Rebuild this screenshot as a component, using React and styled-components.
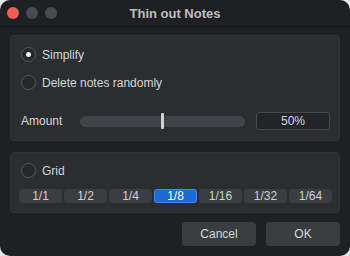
import styled, { createGlobalStyle } from "styled-components";

const GlobalStyle = createGlobalStyle`
  html, body {
    margin: 0;
    padding: 0;
    background: #e6e6e6;
  }
  body {
    font-family: "Liberation Sans", Arial, sans-serif;
  }
`;

const grids = ["1/1", "1/2", "1/4", "1/8", "1/16", "1/32", "1/64"];

const App = () => {
  return (
    <>
      <GlobalStyle />
      <Window>
        <TitleBar>
          <Lights>
            <Light color="#ee5f57" />
            <Light color="#4a4b4e" />
            <Light color="#4a4b4e" />
          </Lights>
          <Title>Thin out Notes</Title>
        </TitleBar>
        <Body>
          <Panel>
            <Options>
              <RadioRow>
                <Radio checked />
                <Label>Simplify</Label>
              </RadioRow>
              <RadioRow>
                <Radio />
                <Label>Delete notes randomly</Label>
              </RadioRow>
            </Options>
            <AmountRow>
              <AmountLabel>Amount</AmountLabel>
              <Track>
                <Thumb />
              </Track>
              <ValueBox>50%</ValueBox>
            </AmountRow>
          </Panel>
          <GridPanel>
            <RadioRow>
              <Radio />
              <Label>Grid</Label>
            </RadioRow>
            <GridRow>
              {grids.map((g) => (
                <GridButton key={g} active={g === "1/8"}>
                  {g}
                </GridButton>
              ))}
            </GridRow>
          </GridPanel>
          <Footer>
            <Button>Cancel</Button>
            <Button>OK</Button>
          </Footer>
        </Body>
      </Window>
    </>
  );
};

export default App;

const Window = styled.div`
  width: 350px;
  height: 256px;
  box-sizing: border-box;
  background: #1f2022;
  border-radius: 10px;
  overflow: hidden;
  display: flex;
  flex-direction: column;
  color: #d6d7d8;
`;

const TitleBar = styled.div`
  height: 26px;
  flex: none;
  border-bottom: 1px solid #151618;
  display: flex;
  align-items: center;
  justify-content: center;
  position: relative;
`;

const Lights = styled.div`
  position: absolute;
  left: 7px;
  top: 7px;
  display: flex;
  gap: 7px;
`;

const Light = styled.div`
  width: 12px;
  height: 12px;
  border-radius: 50%;
  background: ${(p) => p.color};
`;

const Title = styled.div`
  font-size: 13px;
  font-weight: bold;
  color: #bdbec0;
  margin-top: 1px;
`;

const Body = styled.div`
  padding: 8px 10px 0 10px;
  display: flex;
  flex-direction: column;
`;

const Panel = styled.div`
  height: 106px;
  box-sizing: border-box;
  background: #2b2e31;
  border: 1px solid #313437;
  border-radius: 4px;
  padding: 11px 9px 10px 10px;
  display: flex;
  flex-direction: column;
  justify-content: space-between;
`;

const Options = styled.div`
  display: flex;
  flex-direction: column;
  gap: 13px;
`;

const RadioRow = styled.div`
  display: flex;
  align-items: center;
  gap: 6px;
  height: 15px;
`;

const Radio = styled.div`
  width: 15px;
  height: 15px;
  box-sizing: border-box;
  border-radius: 50%;
  border: 1px solid #55585c;
  background: #25272a;
  display: flex;
  align-items: center;
  justify-content: center;
  &::after {
    content: "";
    display: ${(p) => (p.checked ? "block" : "none")};
    width: 5px;
    height: 5px;
    border-radius: 50%;
    background: #f0f0f0;
  }
`;

const Label = styled.span`
  font-size: 12px;
  color: #d6d7d8;
`;

const AmountRow = styled.div`
  display: flex;
  align-items: center;
  height: 18px;
`;

const AmountLabel = styled.span`
  font-size: 12px;
  width: 59px;
  flex: none;
  color: #d6d7d8;
`;

const Track = styled.div`
  flex: 1;
  height: 11px;
  border-radius: 6px;
  background: #404448;
  position: relative;
  margin-right: 11px;
`;

const Thumb = styled.div`
  position: absolute;
  left: 81px;
  top: -3px;
  width: 3px;
  height: 16px;
  border-radius: 1px;
  background: #d0d1d2;
`;

const ValueBox = styled.div`
  width: 74px;
  height: 18px;
  box-sizing: border-box;
  flex: none;
  border: 1px solid #46494d;
  border-radius: 3px;
  background: #232427;
  font-size: 12px;
  display: flex;
  align-items: center;
  justify-content: center;
  color: #d6d7d8;
`;

const GridPanel = styled.div`
  margin-top: 11px;
  height: 61px;
  box-sizing: border-box;
  background: #2b2e31;
  border: 1px solid #313437;
  border-radius: 4px;
  padding: 10px 7px 9px 8px;
  display: flex;
  flex-direction: column;
  justify-content: space-between;
  & > ${RadioRow} {
    padding-left: 2px;
  }
`;

const GridRow = styled.div`
  display: grid;
  grid-template-columns: repeat(7, 1fr);
  gap: 2px;
`;

const GridButton = styled.div`
  height: 14px;
  box-sizing: border-box;
  border-radius: 3px;
  background: ${(p) => (p.active ? "#1c6bd3" : "#3a3d41")};
  border: 1px solid ${(p) => (p.active ? "#3f8ef0" : "#3a3d41")};
  color: ${(p) => (p.active ? "#ffffff" : "#d0d1d3")};
  font-size: 12px;
  display: flex;
  align-items: center;
  justify-content: center;
  line-height: 1;
`;

const Footer = styled.div`
  margin-top: 9px;
  display: flex;
  justify-content: flex-end;
  gap: 10px;
`;

const Button = styled.div`
  width: 74px;
  height: 24px;
  border-radius: 4px;
  background: #3a3d40;
  color: #d6d7d8;
  font-size: 12px;
  display: flex;
  align-items: center;
  justify-content: center;
`;
